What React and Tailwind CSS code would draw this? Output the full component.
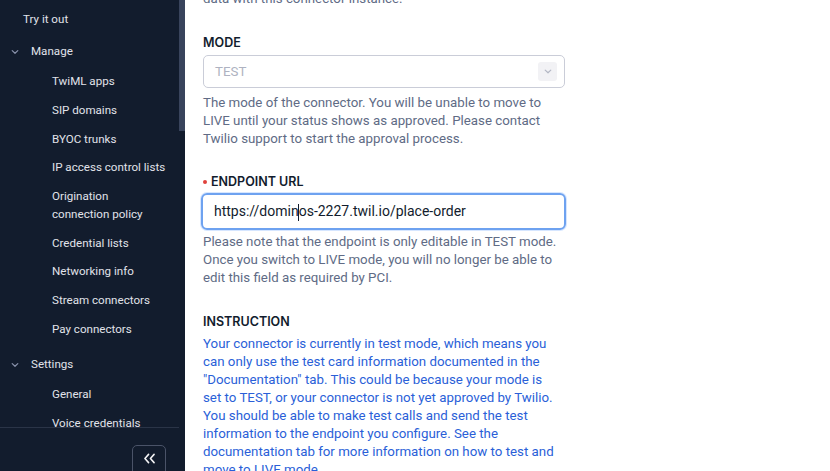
import React from "react";

const Chevron = ({ className = "" }) => (
  <svg viewBox="0 0 10 6" className={className} fill="none">
    <path d="M1.5 1.2 5 4.6l3.5-3.4" stroke="currentColor" strokeWidth="1.5" strokeLinecap="round" strokeLinejoin="round" />
  </svg>
);

const SubItem = ({ children, h = "h-[28.7px]" }) => (
  <div className={`${h} shrink-0 flex items-center pl-[52px] text-[11.6px] leading-[18px] text-[#e1e3ea] whitespace-nowrap`}>{children}</div>
);

const Group = ({ children }) => (
  <div className="h-[30px] shrink-0 flex items-center text-[11.6px] text-[#e1e3ea]">
    <Chevron className="w-[8px] h-[6px] ml-[11px] mr-[12px] text-[#8891aa]" />
    <span>{children}</span>
  </div>
);

const body = { fontFamily: "Roboto, 'Noto Sans', sans-serif" };

export default function App() {
  return (
    <div className="w-[830px] h-[471px] flex overflow-hidden bg-white" style={{ fontFamily: "Inter, 'Noto Sans', sans-serif" }}>
      <aside className="w-[185px] h-full flex bg-[#121c2d]" style={body}>
        <div className="flex-1 flex flex-col h-full min-w-0">
          <div className="flex-1 min-h-0 overflow-hidden flex flex-col pt-[6px]">
            <div className="h-[28px] shrink-0 flex items-center pl-[23px] text-[11.6px] text-[#e1e3ea]">Try it out</div>
            <div className="h-[3px] shrink-0" />
            <Group>Manage</Group>
            <SubItem>TwiML apps</SubItem>
            <SubItem>SIP domains</SubItem>
            <SubItem>BYOC trunks</SubItem>
            <SubItem>IP access control lists</SubItem>
            <SubItem h="h-[46.5px]">
              <span>Origination<br />connection policy</span>
            </SubItem>
            <SubItem>Credential lists</SubItem>
            <SubItem>Networking info</SubItem>
            <SubItem>Stream connectors</SubItem>
            <SubItem>Pay connectors</SubItem>
            <div className="h-[7px] shrink-0" />
            <Group>Settings</Group>
            <SubItem>General</SubItem>
            <SubItem>Voice credentials</SubItem>
          </div>
          <div className="h-[44px] shrink-0 border-t border-[#2a3447] flex justify-end pr-[13px] pt-[17px]">
            <div className="w-[34px] h-[36px] rounded-[5px] border border-[#4a5368] flex items-start justify-center pt-[7px] text-[#f4f4f6]">
              <svg viewBox="0 0 14 12" className="w-[13px] h-[11px]" fill="none">
                <path d="M6 1.5 2 6l4 4.5M12 1.5 8 6l4 4.5" stroke="currentColor" strokeWidth="1.7" strokeLinecap="round" strokeLinejoin="round" />
              </svg>
            </div>
          </div>
        </div>
        <div className="w-[6px] h-full flex flex-col">
          <div className="h-[131px] bg-[#39445c]" />
        </div>
      </aside>

      <main className="flex-1 h-full overflow-hidden pl-[18px]">
        <div className="w-[362px] mt-[-10px]">
          <p className="leading-[18px] text-[13.3px] text-[#606b85]" style={body}>data with this connector instance.</p>

          <div className="mt-[26px] text-[12.5px] font-semibold text-[#121c2d] leading-[18px]">MODE</div>
          <div className="mt-[3px] h-[33px] w-[362px] rounded-[5px] border border-[#cacdd8] flex items-center justify-between pl-[11px] pr-[7px]">
            <span className="text-[#aeb2c1] text-[13.3px]" style={body}>TEST</span>
            <div className="w-[19px] h-[19px] rounded-[3px] bg-[#f2f2f5] flex items-center justify-center text-[#b3b7c4]">
              <Chevron className="w-[8px] h-[5px]" />
            </div>
          </div>
          <p className="mt-[6px] leading-[18px] text-[13.3px] text-[#606b85]" style={body}>
            The mode of the connector. You will be unable to move to LIVE until your status shows as approved. Please contact Twilio support to start the approval process.
          </p>

          <div className="mt-[25px] flex items-center text-[12.5px] font-semibold text-[#121c2d] leading-[18px]">
            <span className="w-[4px] h-[4px] rounded-full bg-[#e0413b] mr-[4px]" />
            ENDPOINT URL
          </div>
          <div className="mt-[2px] h-[37px] w-[365px] -ml-[2px] rounded-[6px] border-2 border-[#6ea2f0] shadow-[0_0_0_1px_#d6e6ff] flex items-center pl-[11px]">
            <span className="text-[#121c2d] text-[14px]" style={body}>
              https://domin<span className="inline-block w-[1px] h-[17px] bg-[#121c2d] align-middle -mx-[0.5px]" />os-2227.twil.io/place-order
            </span>
          </div>
          <p className="mt-[3px] leading-[18px] text-[13.3px] text-[#606b85]" style={body}>
            Please note that the endpoint is only editable in TEST mode. Once you switch to LIVE mode, you will no longer be able to edit this field as required by PCI.
          </p>

          <div className="mt-[26px] text-[12.5px] font-semibold text-[#121c2d] leading-[18px]">INSTRUCTION</div>
          <p className="mt-[4px] w-[358px] leading-[18px] text-[13.3px] text-[#2a5fd8]" style={body}>
            Your connector is currently in test mode, which means you can only use the test card information documented in the "Documentation" tab. This could be because your mode is set to TEST, or your connector is not yet approved by Twilio. You should be able to make test calls and send the test information to the endpoint you configure. See the documentation tab for more information on how to test and move to LIVE mode.
          </p>
        </div>
      </main>
    </div>
  );
}
